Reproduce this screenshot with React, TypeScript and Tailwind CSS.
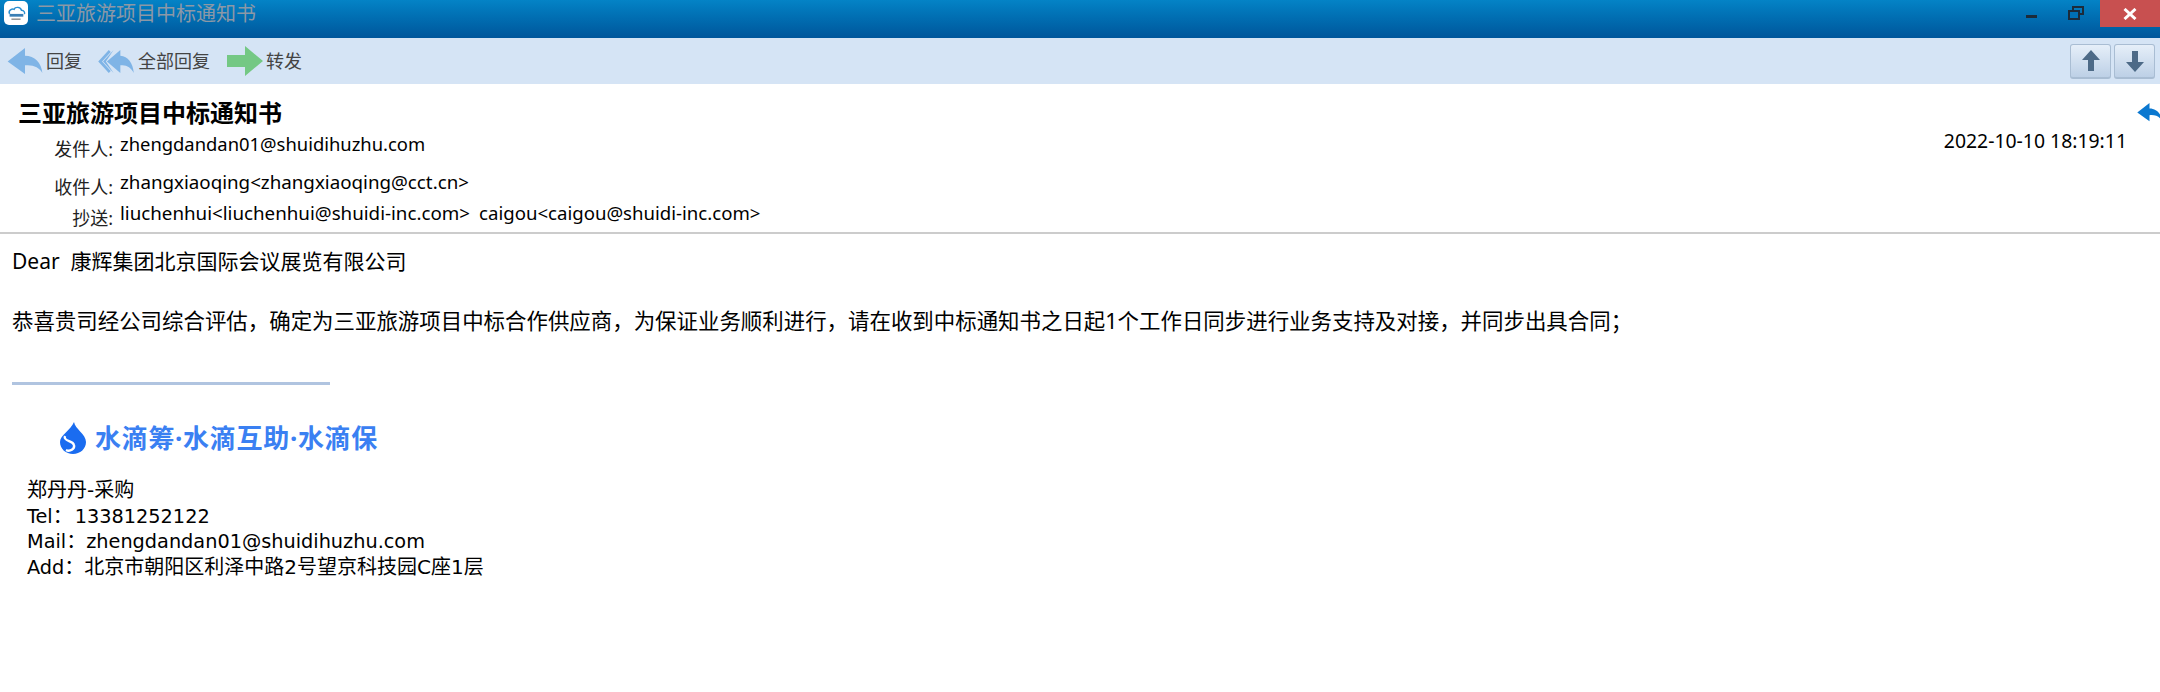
import React from "react";

const cjk = "font-['Noto_Sans','Noto_Sans_CJK_SC',sans-serif]";

const ReplyIcon = ({ color, className }: { color: string; className?: string }) => (
  <svg viewBox="0 0 36 28" className={className}>
    <path d="M18 0 L0 14 L18 27 L18 18 C26 17 33 20 36 26 C35 15 28 8 18 8 Z" fill={color} />
  </svg>
);

const ReplyAllIcon = () => (
  <svg viewBox="0 0 38 26" className="w-[37px] h-[25px]">
    <path d="M11 1 L0 13 L11 25 L13 23 L4 13 L13 3 Z" fill="#7fb4e6" />
    <path d="M16 1 L5 13 L16 25 L16 25 L8 13 Z" fill="#7fb4e6" />
    <path d="M23 1 L9 13 L23 25 L23 17 C29 16 34 19 37 25 C36 14 31 8 23 7 Z" fill="#7fb4e6" />
  </svg>
);

const ForwardIcon = () => (
  <svg viewBox="0 0 36 30" className="w-[36px] h-[30px]">
    <path d="M0 9 H18 V0 L36 15 L18 30 V21 H0 Z" fill="#74c884" />
  </svg>
);

const ToolButton = ({ icon, label }: { icon: React.ReactNode; label: string }) => (
  <div className="flex items-center gap-[3px]">
    {icon}
    <span className="text-[18px] text-[#444]">{label}</span>
  </div>
);

const NavButton = ({ up }: { up?: boolean }) => (
  <div className="w-[41px] h-[35px] flex items-center justify-center rounded-[3px] border border-[#a9bdd3] border-b-2 bg-gradient-to-b from-[#e6eff9] to-[#bdd0e6]">
    <svg viewBox="0 0 18 22" className={`w-[18px] h-[22px] ${up ? "" : "rotate-180"}`}>
      <path d="M9 0 L18 10 H12 V21 H6 V10 H0 Z" fill="#4d6a87" />
    </svg>
  </div>
);

const HeaderRow = ({ label, className, children }: { label: string; className?: string; children: React.ReactNode }) => (
  <div className={`flex ${className ?? ""}`}>
    <div className="w-[113px] text-right text-[18px] leading-[24px] text-[#222] pt-[5px]">{label}:</div>
    <div className="ml-[7px] leading-[24px] text-black whitespace-pre">{children}</div>
  </div>
);

export default function App() {
  return (
    <div className={`w-[2160px] h-[692px] overflow-hidden bg-white ${cjk}`}>
      {/* title bar */}
      <div className="h-[38px] flex items-start bg-gradient-to-b from-[#0483c6] to-[#00569b]">
        <div className="ml-[4px] mt-[1px] w-[24px] h-[24px] rounded-[5px] bg-white flex items-center justify-center">
          <svg viewBox="0 0 24 24" className="w-[22px] h-[22px]">
            <path d="M5 13 C3 9 8 7 10 8 C11 5 17 5 18 9 C21 9 22 12 21 13" fill="none" stroke="#2a8fd0" strokeWidth="1.6" />
            <rect x="5" y="13" width="15" height="3" fill="#3b7fb5" />
            <rect x="7" y="18" width="10" height="1.5" fill="#888" />
          </svg>
        </div>
        <span className="ml-[8px] mt-[1px] text-[20px] leading-[26px] text-[#8c98a6]">三亚旅游项目中标通知书</span>
        <div className="ml-auto flex items-start">
          <div className="w-[11px] h-[3px] mt-[15px] mr-[31px] bg-[#1c2b3a]" />
          <svg viewBox="0 0 16 14" className="w-[16px] h-[14px] mt-[6px] mr-[16px]" fill="none" stroke="#1c2b3a" strokeWidth="2">
            <rect x="5" y="1" width="10" height="7" />
            <rect x="1" y="5" width="10" height="8" fill="#0070b4" />
          </svg>
          <div className="w-[60px] h-[27px] bg-[#c85050] flex items-center justify-center">
            <svg viewBox="0 0 14 12" className="w-[14px] h-[12px]">
              <path d="M1.5 1 L12.5 11 M12.5 1 L1.5 11" stroke="#fff" strokeWidth="3" />
            </svg>
          </div>
        </div>
      </div>

      {/* toolbar */}
      <div className="h-[46px] bg-[#d5e4f5] flex items-center pl-[7px] pr-[5px]">
        <ToolButton icon={<ReplyIcon color="#7fb4e6" className="w-[36px] h-[27px]" />} label="回复" />
        <div className="w-[16px]" />
        <ToolButton icon={<ReplyAllIcon />} label="全部回复" />
        <div className="w-[17px]" />
        <ToolButton icon={<ForwardIcon />} label="转发" />
        <div className="ml-auto flex gap-[3px]">
          <NavButton up />
          <NavButton />
        </div>
      </div>

      {/* mail header */}
      <div className="h-[150px] border-b-2 border-[#cccccc] flex flex-col relative">
        <div className="pl-[18px] pt-[13px] text-[24px] leading-[32px] font-bold text-black">三亚旅游项目中标通知书</div>
        <HeaderRow label="发件人" className="mt-[3px]">
          <span className="text-[18.4px]">zhengdandan01@shuidihuzhu.com</span>
        </HeaderRow>
        <HeaderRow label="收件人" className="mt-[9px]">
          <span className="text-[18.75px]">{"zhangxiaoqing<zhangxiaoqing@cct.cn>"}</span>
        </HeaderRow>
        <HeaderRow label="抄送" className="mt-[2px]">
          <span className="text-[18.75px]">{"liuchenhui<liuchenhui@shuidi-inc.com>"}</span>
          <span className="ml-[9px] text-[18.6px]">{"caigou<caigou@shuidi-inc.com>"}</span>
        </HeaderRow>
        <div className="absolute right-[33px] top-[45px] text-[19.4px] leading-[24px] text-black">2022-10-10 18:19:11</div>
        <ReplyIcon color="#0b78d0" className="absolute right-[-2px] top-[19px] w-[25px] h-[19px]" />
      </div>

      {/* body */}
      <div className="pl-[12px] pt-[13px] text-black">
        <div className="leading-[28px] text-[21px]">Dear&nbsp; 康辉集团北京国际会议展览有限公司</div>
        <div className="mt-[32px] leading-[28px] text-[21.45px] whitespace-nowrap">恭喜贵司经公司综合评估，确定为三亚旅游项目中标合作供应商，为保证业务顺利进行，请在收到中标通知书之日起1个工作日同步进行业务支持及对接，并同步出具合同；</div>
        <div className="mt-[47px] w-[318px] h-[3px] bg-[#b0c4e0]" />
        <div className="ml-[48px] mt-[36px] flex items-center">
          <svg viewBox="0 0 26 32" className="w-[26px] h-[32px]">
            <path d="M14 0 C15 7 26 12 26 20 C26 27 20 32 13 32 C6 32 0 27 0 20 C0 13 11 8 14 0 Z" fill="#1a6cf0" />
            <path d="M5 14 C3 20 13 18 14 23 C15 27 10 30 6 28" fill="none" stroke="#fff" strokeWidth="2.4" />
          </svg>
          <span className="ml-[9px] text-[26px] leading-[34px] font-bold text-[#3a80f2] tracking-[0.7px] whitespace-pre">水滴筹·水滴互助·水滴保</span>
        </div>
        <div className="ml-[15px] mt-[23px] font-['DejaVu_Sans','Noto_Sans_CJK_SC',sans-serif] text-[20px] leading-[25.5px]">
          <div>郑丹丹-采购</div>
          <div><span className="text-[19.3px]">Tel</span>：<span className="ml-[2px] text-[19.3px]">13381252122</span></div>
          <div><span className="text-[19.3px]">Mail</span>：<span className="text-[19.3px]">zhengdandan01@shuidihuzhu.com</span></div>
          <div><span className="text-[19.3px]">Add</span>：北京市朝阳区利泽中路2号望京科技园C座1层</div>
        </div>
      </div>
    </div>
  );
}
